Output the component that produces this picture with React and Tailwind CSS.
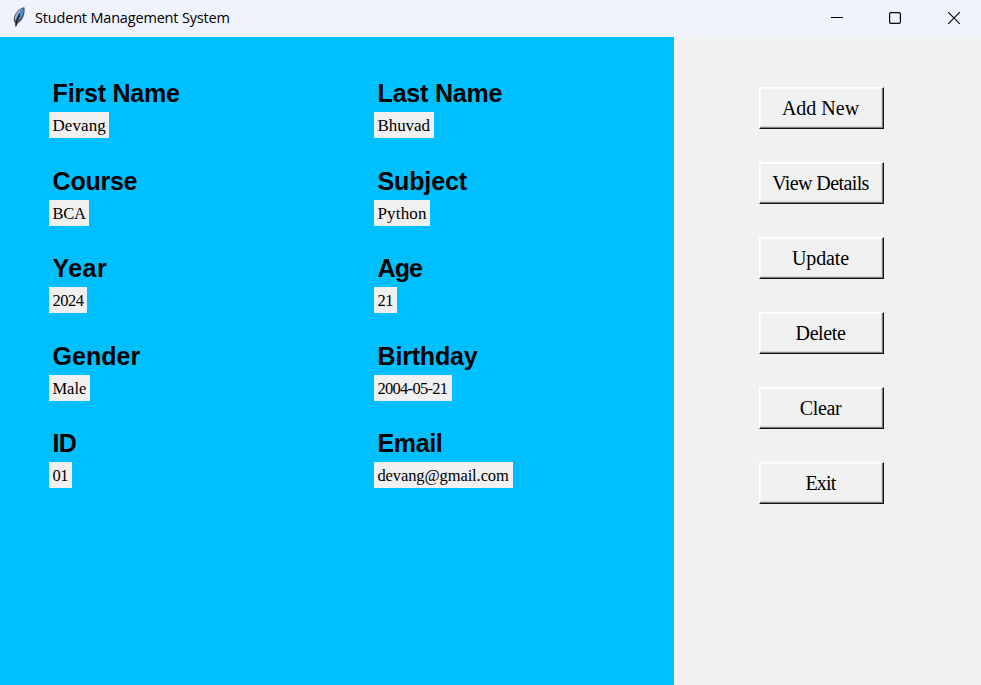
const FIELDS = [
  { label: "First Name", value: "Devang", box: "w-[60px] text-[17px] tracking-[0.1px]", head: "tracking-[-0.2px]" },
  { label: "Last Name", value: "Bhuvad", box: "w-[60px] text-[17px] tracking-[-0.05px]", head: "tracking-[-0.2px]" },
  { label: "Course", value: "BCA", box: "w-[40px] text-[16.5px] tracking-[-0.2px]", head: "tracking-[-0.25px]" },
  { label: "Subject", value: "Python", box: "w-[56px] text-[17px] tracking-[0.2px]", head: "tracking-[-0.15px]" },
  { label: "Year", value: "2024", box: "w-[37.5px] text-[16.5px] tracking-[-0.5px]", head: "tracking-[0.4px]" },
  { label: "Age", value: "21", box: "w-[22.5px] text-[16.5px] tracking-[-0.5px]", head: "tracking-[-0.9px]" },
  { label: "Gender", value: "Male", box: "w-[41px] text-[16.5px] tracking-[0px]", head: "tracking-[0px]" },
  { label: "Birthday", value: "2004-05-21", box: "w-[77.5px] text-[16.5px] tracking-[-0.7px]", head: "tracking-[-0.2px]" },
  { label: "ID", value: "01", box: "w-[22.5px] text-[16.5px] tracking-[-0.5px]", head: "tracking-[-0.8px]" },
  { label: "Email", value: "devang@gmail.com", box: "w-[139px] text-[16.5px] tracking-[-0.1px]", head: "tracking-[-0.4px]" },
];

const BUTTONS = [
  { text: "Add New", cls: "tracking-[0px]" },
  { text: "View Details", cls: "tracking-[-0.6px]" },
  { text: "Update", cls: "tracking-[-0.1px]" },
  { text: "Delete", cls: "tracking-[-0.4px]" },
  { text: "Clear", cls: "tracking-[-0.4px]" },
  { text: "Exit", cls: "tracking-[-0.8px]" },
];

function Feather() {
  return (
    <svg className="h-[22px] w-[14px] shrink-0" viewBox="0 0 14 22">
      <path d="M12.3 1.2C8.4 1.6 4 5.3 2.3 10.3C1.4 13 1.6 15.6 3 17.4L3.6 20.8L5.8 17.6C9 15.8 11.6 12 12.3 7.8C12.7 5 12.9 2.6 12.3 1.2Z" fill="#4c5560" />
      <path d="M11.2 2.2C8 3.5 6.2 6 5.4 8.5L5 15.8C8.3 14 10.6 10.5 11.2 7C11.5 5 11.6 3.4 11.2 2.2Z" fill="#4f8bcb" />
      <path d="M9.6 2.8C6 4.4 3.5 8.2 2.8 12.4L3.2 14.7L6.2 8.2Z" fill="#a9b6c2" />
      <path d="M7.6 7.5C6 11 4.6 14.5 3.9 20.3" stroke="#15202c" strokeWidth="1.2" fill="none" />
      <path d="M6.2 11.5L8.2 10M5.4 14.2L7.4 13" stroke="#1d3658" strokeWidth="1" />
    </svg>
  );
}

export default function App() {
  return (
    <div className="flex h-[685px] w-[981px] flex-col overflow-hidden bg-[#f1f1f1] text-black">
      <header className="flex h-[37px] shrink-0 items-start bg-[#f0f3fb]">
        <div className="flex flex-1 items-start pl-[12px] pt-[6px]">
          <Feather />
          <h1 className="ml-[9px] whitespace-nowrap pt-[1px] font-['Open_Sans',sans-serif] text-[14.5px] leading-[22px] tracking-[-0.18px]">
            Student Management System
          </h1>
        </div>
        <svg className="h-[37px] w-[181px] shrink-0" viewBox="0 0 181 37" fill="none" stroke="#000">
          <path d="M31 17.5H43" />
          <rect x="89.6" y="12.6" width="10.8" height="10.8" rx="1.3" strokeWidth="1.2" />
          <path d="M148.2 12.2L159.8 23.8M159.8 12.2L148.2 23.8" strokeWidth="1.1" />
        </svg>
      </header>
      <main className="flex flex-1">
        <section className="w-[674px] bg-[#00bfff] pl-[49px] pt-[38px]">
          <div className="grid auto-rows-[87.5px] grid-cols-[325px_300px]">
            {FIELDS.map((f) => (
              <div key={f.label}>
                <div className={`h-[37px] whitespace-nowrap pl-[3.6px] font-['Liberation_Sans',sans-serif] text-[25px] font-bold leading-[37px] ${f.head}`}>
                  {f.label}
                </div>
                <div className={`h-[26.3px] whitespace-nowrap bg-[#f0f0f0] pl-[3.4px] font-['Liberation_Serif',serif] leading-[27px] ${f.box}`}>
                  {f.value}
                </div>
              </div>
            ))}
          </div>
        </section>
        <aside className="flex flex-col gap-[33px] pl-[84.5px] pt-[50px]">
          {BUTTONS.map((b) => (
            <button
              key={b.text}
              className="h-[42px] w-[125.5px] border border-b-[#101010] border-l-white border-r-[#101010] border-t-white bg-[#f1f1f1] pr-[1.5px] font-['Liberation_Serif',serif] text-[20px] leading-[38px] shadow-[inset_-1px_-1px_0_#808080,inset_-2px_-2px_0_#d8d8d8,inset_1px_1px_0_#fafafa]"
            >
              <span className={b.cls}>{b.text}</span>
            </button>
          ))}
        </aside>
      </main>
    </div>
  );
}
